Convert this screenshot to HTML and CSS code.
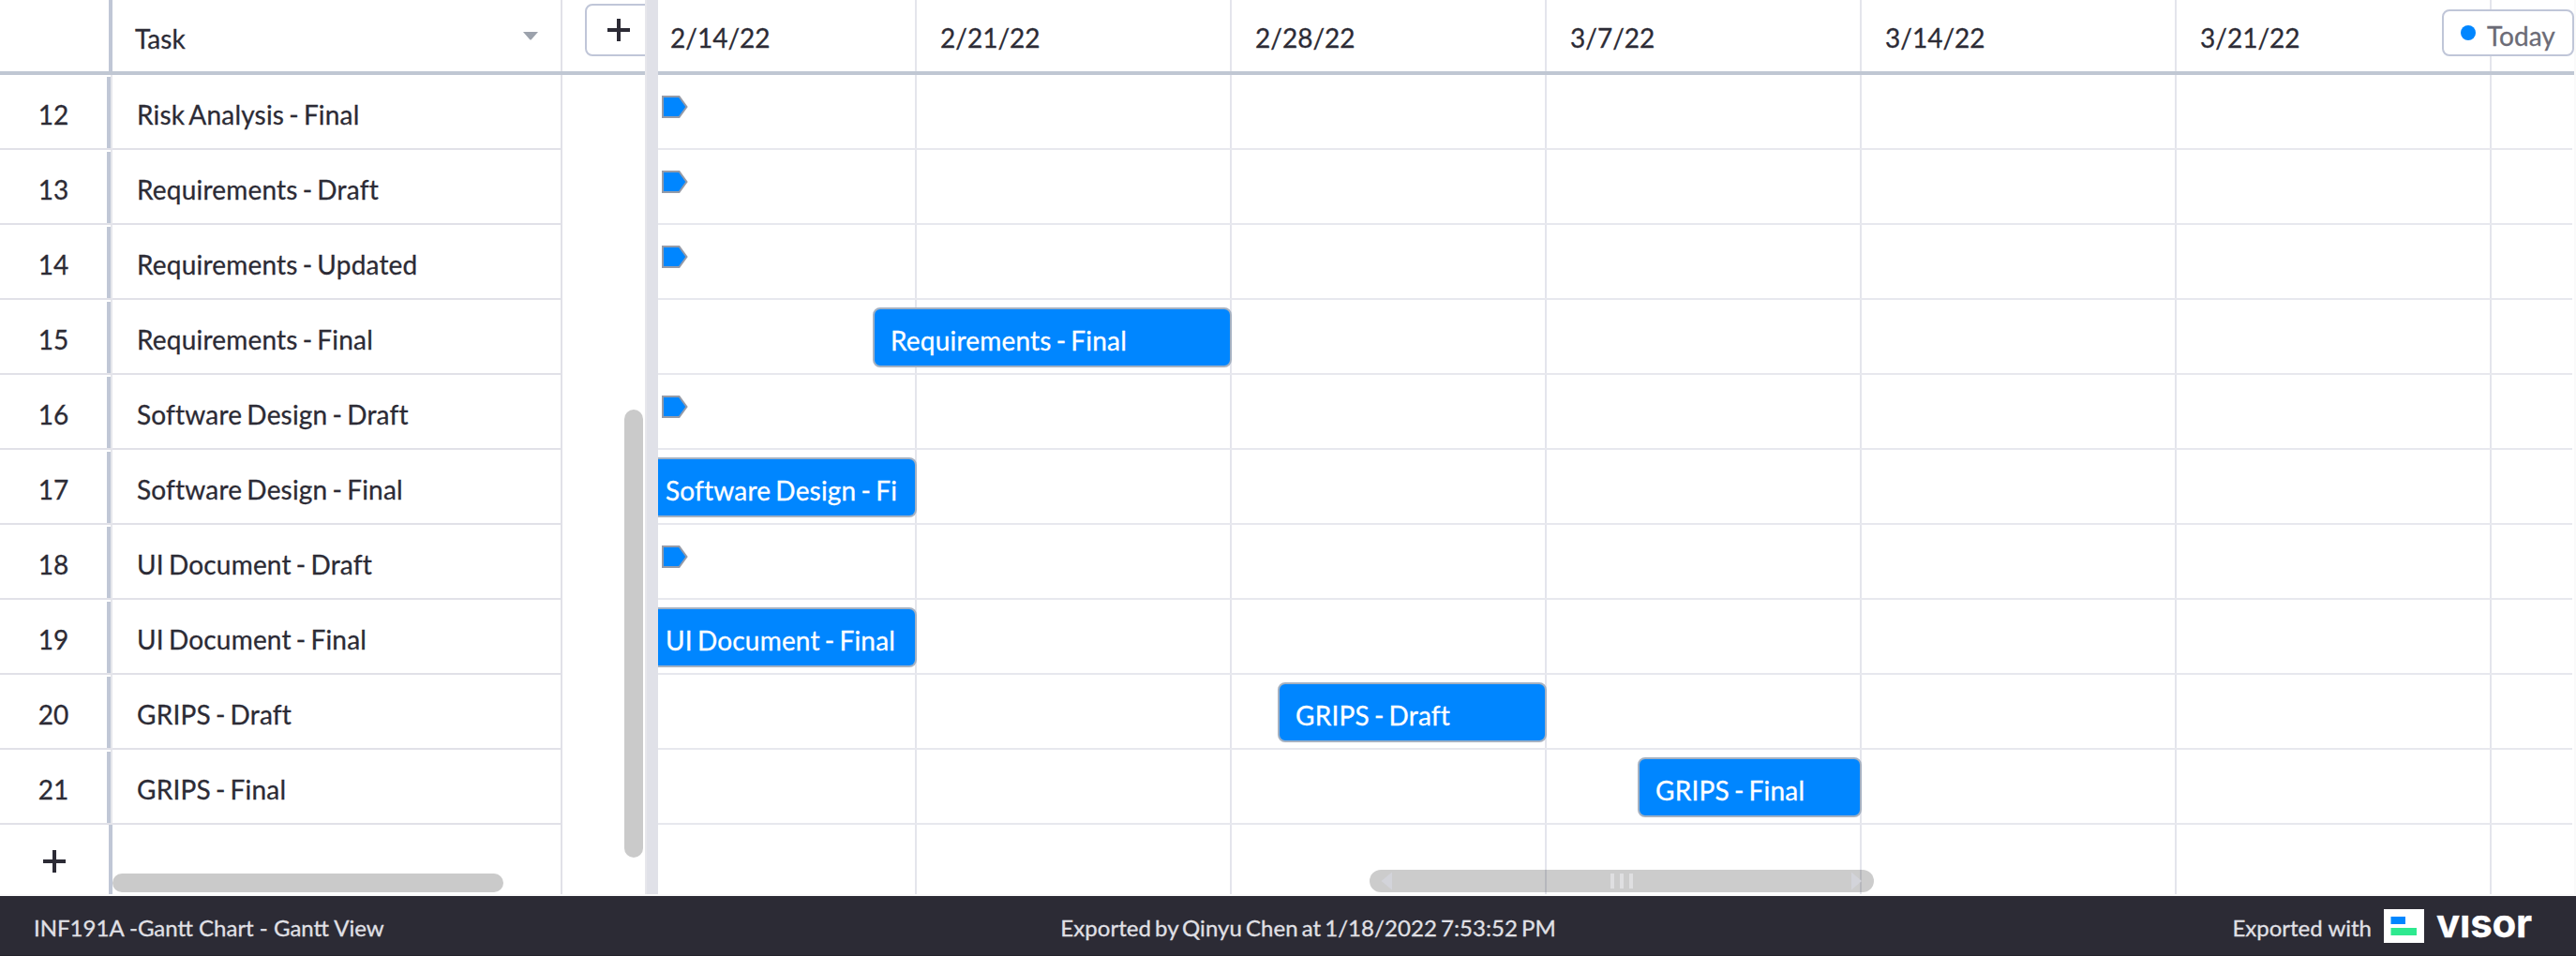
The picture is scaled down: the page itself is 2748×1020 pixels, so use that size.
FILE: index.html
```html
<!DOCTYPE html>
<html lang="en">
<head>
<meta charset="utf-8">
<title>Gantt View</title>
<link rel="stylesheet" href="styles.css">
</head>
<body>
<div class="app">
  <main class="workspace">
    <section class="table">
      <header class="table-head">
        <div class="head-num"></div>
        <div class="head-task"><span>Task</span>
          <svg class="caret" width="16" height="9" viewBox="0 0 16 9"><path d="M0 0H16L9 8Q8 9 7 8Z" fill="#9ca2ac"/></svg>
        </div>
        <div class="head-add"><div class="add-column"><svg width="24" height="24" viewBox="0 0 24 24"><path d="M12 0V24M0 12H24" stroke="#2c2b35" stroke-width="4"/></svg></div></div>
      </header>
      <div class="row"><div class="num"><span>12</span></div><div class="task">Risk Analysis - Final</div></div>
      <div class="row"><div class="num"><span>13</span></div><div class="task">Requirements - Draft</div></div>
      <div class="row"><div class="num"><span>14</span></div><div class="task">Requirements - Updated</div></div>
      <div class="row"><div class="num"><span>15</span></div><div class="task">Requirements - Final</div></div>
      <div class="row"><div class="num"><span>16</span></div><div class="task">Software Design - Draft</div></div>
      <div class="row"><div class="num"><span>17</span></div><div class="task">Software Design - Final</div></div>
      <div class="row"><div class="num"><span>18</span></div><div class="task">UI Document - Draft</div></div>
      <div class="row"><div class="num"><span>19</span></div><div class="task">UI Document - Final</div></div>
      <div class="row"><div class="num"><span>20</span></div><div class="task">GRIPS - Draft</div></div>
      <div class="row"><div class="num"><span>21</span></div><div class="task">GRIPS - Final</div></div>
      <div class="row-new">
        <div class="new-num"><svg width="24" height="24" viewBox="0 0 24 24"><path d="M12 0V24M0 12H24" stroke="#2c2b35" stroke-width="4"/></svg></div>
        <div class="new-task"></div>
      </div>
      <div class="scroll-v"></div>
      <div class="scroll-h"></div>
    </section>
    <div class="splitter"></div>
    <section class="chart">
      <header class="weeks">
        <div class="week first">2/14/22</div>
        <div class="week">2/21/22</div>
        <div class="week">2/28/22</div>
        <div class="week">3/7/22</div>
        <div class="week">3/14/22</div>
        <div class="week">3/21/22</div>
        <div class="today"><i class="dot"></i><span>Today</span></div>
      </header>
      <div class="lanes">
        <div class="lane"><svg class="milestone" width="28" height="24" viewBox="0 0 28 24"><path d="M1 1H18.500L26.500 12L18.500 23H1Z"/></svg></div>
        <div class="lane"><svg class="milestone" width="28" height="24" viewBox="0 0 28 24"><path d="M1 1H18.500L26.500 12L18.500 23H1Z"/></svg></div>
        <div class="lane"><svg class="milestone" width="28" height="24" viewBox="0 0 28 24"><path d="M1 1H18.500L26.500 12L18.500 23H1Z"/></svg></div>
        <div class="lane"><div class="bar" style="margin-left:229px;width:383px"><span>Requirements - Final</span></div></div>
        <div class="lane"><svg class="milestone" width="28" height="24" viewBox="0 0 28 24"><path d="M1 1H18.500L26.500 12L18.500 23H1Z"/></svg></div>
        <div class="lane"><div class="bar cut" style="width:276px"><span>Software Design - Final</span></div></div>
        <div class="lane"><svg class="milestone" width="28" height="24" viewBox="0 0 28 24"><path d="M1 1H18.500L26.500 12L18.500 23H1Z"/></svg></div>
        <div class="lane"><div class="bar cut" style="width:276px"><span>UI Document - Final</span></div></div>
        <div class="lane"><div class="bar" style="margin-left:661px;width:287px"><span>GRIPS - Draft</span></div></div>
        <div class="lane"><div class="bar" style="margin-left:1045px;width:239px"><span>GRIPS - Final</span></div></div>
      </div>
      <div class="range">
        <svg width="538" height="24" viewBox="0 0 538 24">
          <rect width="538" height="24" rx="12" fill="#000" fill-opacity=".2"/>
          <path d="M12.500 12L24 2.500V21.500ZM525 12L514 2.500V21.500Z" fill="#d3d4da"/>
          <path d="M257 4h4v16h-4zM267 4h4v16h-4zM277 4h4v16h-4z" fill="#dfdfe1"/>
        </svg>
      </div>
    </section>
  </main>
  <footer class="footer">
    <div class="doc">INF191A -Gantt Chart - Gantt View</div>
    <div class="by">Exported by Qinyu Chen at 1/18/2022 7:53:52 PM</div>
    <div class="brand"><span>Exported with</span>
      <svg class="mark" width="43" height="36" viewBox="0 0 43 36"><path d="M0 0H43V36H0Z" fill="#fff"/><path d="M7.500 8H23V16H7.500Z" fill="#0086ff"/><path d="M7.500 20H35V28H7.500Z" fill="#2ee98f"/></svg>
      <span class="wordmark">visor</span>
    </div>
  </footer>
</div>
</body>
</html>
```
FILE: styles.css
```css
* { box-sizing: border-box; }
body { margin: 0; font-family: Lato, "Liberation Sans", sans-serif; font-size: 28px; line-height: 34px; color: #2c2b35; background: #fff; -webkit-text-stroke: .3px currentColor; }
svg { display: block; flex: none; }
.app { width: 2748px; height: 1020px; display: flex; flex-direction: column; overflow: hidden; }
.workspace { height: 956px; display: flex; border-bottom: 2px solid #fafafa; border-right: 2px solid #fafafa; }

.table { position: relative; width: 688px; flex: none; overflow: hidden; display: flex; flex-direction: column; }
.table-head { height: 80px; flex: none; display: flex; border-bottom: 4px solid #c0c7d3; }
.head-num { width: 120px; flex: none; border-right: 4px solid #c0c7d6; }
.head-task { width: 480px; flex: none; display: flex; align-items: center; justify-content: space-between; padding: 5px 24px 0 24px; border-right: 2px solid #e1e1e8; }
.caret { margin-top: -5px; }
.head-add { flex: none; padding: 4px 0 0 24px; }
.add-column { width: 74px; height: 56px; border: 2px solid #c0c6d8; border-radius: 8px; padding: 14px 0 0 22px; }
.row { height: 80px; flex: none; display: flex; }
.num { width: 120px; padding-top: 2px; border-right: 2px solid #e6e7ec; border-bottom: 2px solid #e1e1e8; }
.num span { display: block; height: 76px; border-right: 4px solid #c0c7d6; padding: 23px 0 0 0; text-align: center; }
.task { width: 480px; padding: 25px 0 0 26px; border-right: 2px solid #e1e1e8; border-bottom: 2px solid #e1e1e8; white-space: nowrap; }
.task, .bar { letter-spacing: .2px; word-spacing: -2.3px; }
.row-new { flex: 1; display: flex; }
.new-num { width: 120px; border-right: 4px solid #c0c7d6; padding: 27px 0 0 46px; }
.new-task { width: 480px; border-right: 2px solid #e1e1e8; }
.scroll-v { position: absolute; left: 666px; top: 437px; width: 20px; height: 478px; border-radius: 10px; background: #cacaca; }
.scroll-h { position: absolute; left: 120px; top: 932px; width: 417px; height: 20px; border-radius: 10px; background: #cacaca; }

.splitter { width: 14px; flex: none; background: #e0e1e8; border-left: 2px solid #e7e7ec; }

.chart { position: relative; flex: 1; overflow: hidden; background: linear-gradient(90deg, transparent 334px, #e4e5ec 334px) -60px 0 / 336px 100%; }
.weeks { height: 80px; display: flex; border-bottom: 4px solid #c0c7d3; }
.week { width: 336px; flex: none; padding: 23px 0 0 25px; }
.week.first { width: 276px; padding-left: 13px; }
.today { position: absolute; right: 0; top: 10px; width: 141px; height: 50px; display: flex; align-items: center; padding-left: 18px; gap: 12px; border: 2px solid #c0c6d8; border-radius: 8px; background: #fff; color: #6b6b76; }
.today span { padding-top: 5px; }
.dot { width: 16px; height: 16px; border-radius: 8px; background: #0086ff; }
.lane { width: 2042px; height: 80px; display: flex; align-items: flex-start; border-bottom: 2px solid #e7e8ee; }
.milestone { margin: 22px 0 0 4px; fill: #0086ff; stroke: #959ba8; stroke-width: 2; }
.bar { height: 64px; margin-top: 8px; flex: none; border: 2px solid #a4b1c2; border-radius: 8px; background: #0086ff; color: #fff; padding: 16px 18px 0 17px; overflow: hidden; }
.bar span { display: block; overflow: hidden; white-space: nowrap; }
.bar.cut { border-left: 0; border-radius: 0 8px 8px 0; padding-left: 8px; }
.range { position: absolute; left: 759px; top: 928px; }

.footer { height: 64px; flex: none; display: flex; justify-content: space-between; align-items: center; padding: 0 48px 0 36px; background: #2c2b35; border-bottom: 1px solid #24232c; color: #e0e0e6; font-size: 24px; line-height: 30px; }
.doc, .by, .brand > span:first-child { padding-top: 4px; }
.by { word-spacing: -2.3px; letter-spacing: .08px; }
.brand { display: flex; align-items: center; }
.mark { margin: 1px 13px 0 13px; }
.wordmark { width: 101px; margin-bottom: 6px; font-family: Inter, sans-serif; font-size: 42px; line-height: 50px; font-weight: 700; letter-spacing: -.2px; color: #fff; white-space: nowrap; clip-path: inset(17px -6px 0 -2px); }
```
